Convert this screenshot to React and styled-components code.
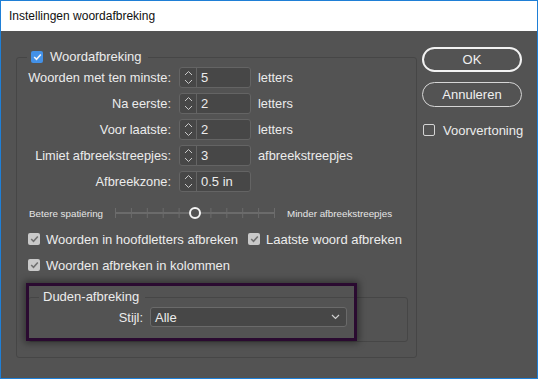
import React from 'react';
import styled, { createGlobalStyle } from 'styled-components';

const Global = createGlobalStyle`
html, body {
 margin:0;
 padding:0;
 background:#535353;
}
* { box-sizing:border-box; }
`;

const Window = styled.div`
width:538px;
height:379px;
border:1px solid #1f7fd6;
background:#535353;
font-family:"Liberation Sans", Arial, sans-serif;
font-size:12.8px;
color:#ececec;
display:flex;
flex-direction:column;
overflow:hidden;
`;
const TitleBar = styled.div`
height:30px;
flex:none;
background:#fff;
color:#111;
font-size:12px;
display:flex;
align-items:center;
padding-left:8px;
`;
const Body = styled.div`
flex:1;
display:flex;
align-items:flex-start;
gap:5px;
padding:16px 0 0 15px;
`;
const Group = styled.fieldset`
margin:${p => p.$top || 0}px 0 0 0;
padding:${p => p.$pad};
width:${p => p.$w}px;
border:1px solid #464646;
border-radius:3px;
min-width:0;
`;
const Legend = styled.legend`
margin-left:${p => p.$ml}px;
padding:0 6px 0 4px;
height:16px;
line-height:16px;
font-size:13px;
display:flex;
align-items:center;
gap:7px;
`;
const Box = styled.span`
width:12px;
height:12px;
flex:none;
border-radius:2px;
display:inline-flex;
align-items:center;
justify-content:center;
background:${p => p.$tone === 'blue' ? '#4391e8' : p.$tone === 'grey' ? '#c9c9c9' : 'transparent'};
border:${p => p.$tone === 'empty' ? '1px solid #d4d4d4' : 'none'};
`;
const Fields = styled.div`
display:grid;
grid-template-columns:154px 73px auto;
column-gap:7px;
row-gap:5px;
align-items:center;
`;
const Label = styled.span`
text-align:right;
white-space:nowrap;
`;
const Spinner = styled.div`
height:21px;
display:flex;
border:1px solid #646464;
border-radius:3px;
background:#474747;
margin-left:1px;
`;
const Arrows = styled.div`
width:17px;
border-right:1px solid #646464;
display:flex;
align-items:center;
justify-content:center;
`;
const Value = styled.span`
padding-left:4px;
line-height:19px;
font-size:13px;
`;
const SliderRow = styled.div`
margin-top:14px;
height:14px;
padding-left:12px;
display:flex;
align-items:center;
font-size:9.8px;
color:#e6e6e6;
`;
const SliderLabel = styled.span`
width:${p => p.$w ? p.$w + 'px' : 'auto'};
margin-left:${p => p.$ml || 0}px;
white-space:nowrap;
`;
const Checks = styled.div`
margin-top:11px;
padding-left:11px;
display:grid;
grid-template-columns:220px auto;
row-gap:10px;
`;
const Check = styled.label`
height:16px;
display:flex;
align-items:center;
gap:6px;
font-size:13px;
white-space:nowrap;
`;
const DudenWrap = styled.div`
position:relative;
margin:16px 0 0 11px;
`;
const Highlight = styled.div`
position:absolute;
left:-2px;
top:-6px;
width:331px;
height:58px;
border:3px solid #2a0a30;
box-shadow:0 0 7px 2px rgba(0,0,0,0.4);
pointer-events:none;
`;
const StyleRow = styled.div`
display:grid;
grid-template-columns:114px 197px;
column-gap:7px;
align-items:center;
`;
const Select = styled.div`
height:20px;
border:1px solid #6a6a6a;
border-radius:3px;
background:#474747;
display:flex;
align-items:center;
justify-content:space-between;
padding:0 6px 0 4px;
font-size:13px;
`;
const Side = styled.div`
width:100px;
display:flex;
flex-direction:column;
gap:10px;
`;
const Button = styled.div`
height:25px;
border:${p => p.$primary ? '2px solid #f2f2f2' : '1px solid #d6d6d6'};
border-radius:13px;
display:flex;
align-items:center;
justify-content:center;
font-size:13px;
color:#f0f0f0;
`;
const Preview = styled(Check)`
margin:5px 0 0 1px;
gap:8px;
`;

const Tick = ({ color = '#f2f4f8' }) => (
 <svg width="9" height="8" viewBox="0 0 9 8">
  <polyline points="1.2,4 3.5,6.3 7.8,1.5" fill="none" stroke={color} strokeWidth="1.6" />
 </svg>
);

const UpDown = () => (
 <svg width="9" height="17" viewBox="0 0 9 17">
  <polyline points="1,6 4.5,2.5 8,6" fill="none" stroke="#c8c8c8" strokeWidth="1" />
  <polyline points="1,11 4.5,14.5 8,11" fill="none" stroke="#c8c8c8" strokeWidth="1" />
 </svg>
);

const Chevron = () => (
 <svg width="9" height="6" viewBox="0 0 9 6">
  <polyline points="1,1 4.5,4.5 8,1" fill="none" stroke="#d0d0d0" strokeWidth="1.2" />
 </svg>
);

const Slider = () => {
 const ticks = Array.from({ length: 11 }, (_, i) => 0.5 + i * 15.9);
 return (
  <svg width="160" height="14" viewBox="0 0 160 14">
   <rect x="0" y="6" width="160" height="2" fill="#6b6b6b" />
   {ticks.map((x, i) => (
    <rect key={i} x={x - 0.5} y="2" width="1" height="10" fill="#6b6b6b" />
   ))}
   <circle cx="80" cy="7" r="5" fill="#535353" stroke="#f4f4f4" strokeWidth="2" />
  </svg>
 );
};

const fields = [
 ['Woorden met ten minste:', '5', 'letters'],
 ['Na eerste:', '2', 'letters'],
 ['Voor laatste:', '2', 'letters'],
 ['Limiet afbreekstreepjes:', '3', 'afbreekstreepjes'],
 ['Afbreekzone:', '0.5 in', ''],
];

function App() {
 return (
  <>
   <Global />
   <Window>
    <TitleBar>Instellingen woordafbreking</TitleBar>
    <Body>
     <Group $w={401} $top={2} $pad="2px 0 15px 0">
      <Legend $ml={10}>
       <Box $tone="blue"><Tick /></Box>
       Woordafbreking
      </Legend>
      <Fields>
       {fields.map(([label, value, unit]) => (
        <React.Fragment key={label}>
         <Label>{label}</Label>
         <Spinner>
          <Arrows><UpDown /></Arrows>
          <Value>{value}</Value>
         </Spinner>
         <span>{unit}</span>
        </React.Fragment>
       ))}
      </Fields>
      <SliderRow>
       <SliderLabel $w={86}>Betere spatiëring</SliderLabel>
       <Slider />
       <SliderLabel $ml={12}>Minder afbreekstreepjes</SliderLabel>
      </SliderRow>
      <Checks>
       <Check><Box $tone="grey"><Tick color="#707070" /></Box>Woorden in hoofdletters afbreken</Check>
       <Check><Box $tone="grey"><Tick color="#707070" /></Box>Laatste woord afbreken</Check>
       <Check><Box $tone="grey"><Tick color="#707070" /></Box>Woorden afbreken in kolommen</Check>
      </Checks>
      <DudenWrap>
       <Group $w={380} $pad="2px 0 14px 0">
        <Legend $ml={10}>Duden-afbreking</Legend>
        <StyleRow>
         <Label>Stijl:</Label>
         <Select>
          <span>Alle</span>
          <Chevron />
         </Select>
        </StyleRow>
       </Group>
       <Highlight />
      </DudenWrap>
     </Group>
     <Side>
      <Button $primary>OK</Button>
      <Button>Annuleren</Button>
      <Preview><Box $tone="empty" />Voorvertoning</Preview>
     </Side>
    </Body>
   </Window>
  </>
 );
}

export default App;
